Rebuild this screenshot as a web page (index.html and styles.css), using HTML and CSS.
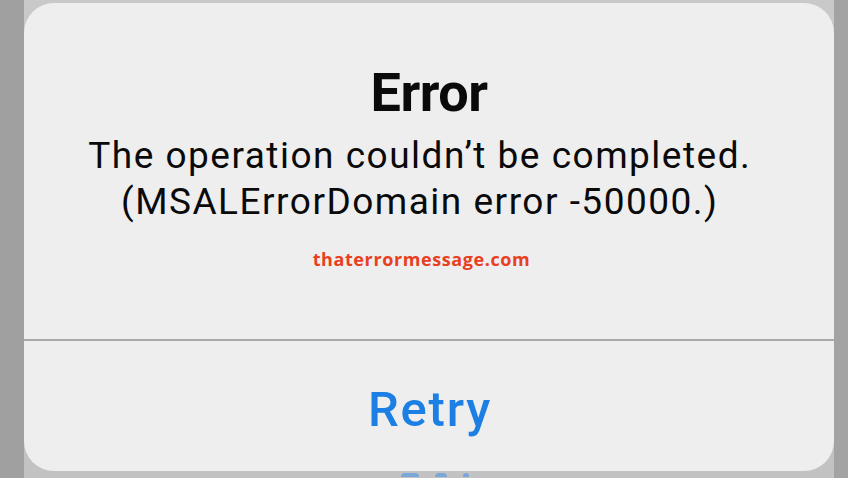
FILE: index.html
```html
<!DOCTYPE html>
<html lang="en">
<head>
  <meta charset="UTF-8" />
  <title>Error</title>
  <link rel="stylesheet" href="styles.css">
</head>
<body>

<div class="edgeLeft"></div>

<div class="stage">
  <div class="alert">
    <div class="alertBody">
      <h1 class="alertTitle">Error</h1>
      <p class="alertMessage">The operation couldn’t be completed.<br>(MSALErrorDomain error -50000.)</p>
      <p class="watermark">thaterrormessage.com</p>
    </div>
    <div class="divider"></div>
    <button class="alertAction">Retry</button>
  </div>
  <!-- tops of the next button's glyphs showing under the sheet -->
  <div class="peek">
    <span class="peekBit wide"></span>
    <span class="peekBit"></span>
    <span class="peekBit small"></span>
  </div>
</div>

<div class="edgeRight"></div>

</body>
</html>
```

FILE: styles.css
```css
html, body {
  margin: 0;
  padding: 0;
  width: 848px;
  height: 478px;
  overflow: hidden;
}

body {
  display: flex;
  background: #c4c4c4;
  font-family: Roboto, "Liberation Sans", sans-serif;
}

.edgeLeft {
  width: 24px;
  background: #a0a0a0;
}

.edgeRight {
  width: 14px;
  background: #a3a3a3;
}

.stage {
  flex: 1;
  display: flex;
  flex-direction: column;
  padding-top: 3px;
  background: linear-gradient(#c9c9c9, #c2c2c2);
}

.alert {
  height: 468px;
  display: flex;
  flex-direction: column;
  background: #eeeeef;
  border-radius: 30px;
}

.alertBody {
  height: 336px;
  display: flex;
  flex-direction: column;
  align-items: center;
  padding-top: 63px;
  box-sizing: border-box;
}

.alertTitle {
  margin: 0;
  font-size: 54px;
  line-height: 54px;
  font-weight: 700;
  color: #0a0a0a;
  letter-spacing: -0.5px;
}

/* the message sits a little left of the title in the shot */
.alertMessage {
  margin: 13px 0 0 0;
  padding: 0 20px 0 1.5px;
  font-size: 37px;
  line-height: 46px;
  font-weight: 400;
  color: #0a0a0a;
  text-align: center;
  letter-spacing: 1.5px;
}

.watermark {
  margin: 24px 0 0 0;
  padding: 0 16px 0 1px;
  font-family: "Open Sans", sans-serif;
  font-size: 18px;
  line-height: 20px;
  font-weight: 700;
  color: #e8401f;
  letter-spacing: 0.6px;
}

.divider {
  height: 2px;
  background: #a9a9a9;
}

.alertAction {
  flex: 1;
  border: none;
  background: none;
  padding: 6px 0 0 2px;
  font-family: Roboto, "Liberation Sans", sans-serif;
  font-size: 49px;
  font-weight: 500;
  color: #1b7fe3;
  letter-spacing: 1.8px;
}

.peek {
  height: 7px;
  display: flex;
  justify-content: center;
  align-items: flex-start;
  gap: 16px;
  padding-left: 12px;
}

.peekBit {
  width: 12px;
  height: 4px;
  margin-top: 2px;
  border-radius: 6px 6px 0 0;
  background: #7aa6d8;
}

.peekBit.wide {
  width: 18px;
}

.peekBit.small {
  width: 6px;
}
```
